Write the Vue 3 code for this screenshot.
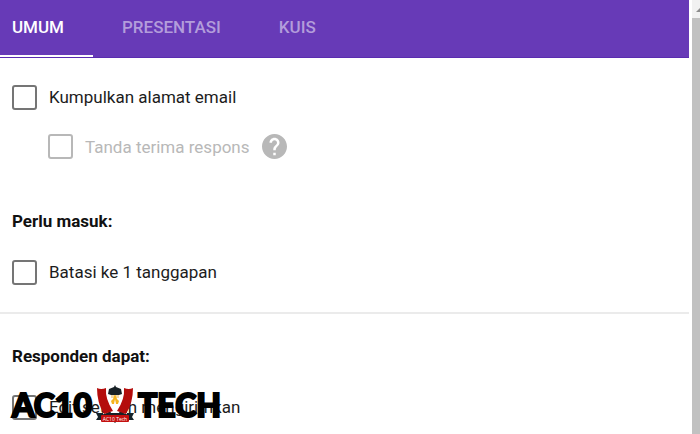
<template>
  <div class="dialog">
    <main class="settings">
      <nav class="tabs" role="tablist">
        <button
          v-for="tab in tabs"
          :key="tab"
          type="button"
          role="tab"
          :aria-selected="tab === activeTab"
          :class="['tab', { active: tab === activeTab }]"
          @click="activeTab = tab"
        >
          {{ tab }}
        </button>
      </nav>

      <section class="section first">
        <label class="option">
          <input v-model="collectEmail" type="checkbox" class="checkbox" />
          <span>Kumpulkan alamat email</span>
        </label>
        <div class="sub-option">
          <label class="option disabled">
            <input type="checkbox" class="checkbox" disabled />
            <span>Tanda terima respons</span>
          </label>
          <svg class="help" viewBox="2 2 20 20" aria-hidden="true">
            <path
              d="M12 2C6.48 2 2 6.48 2 12s4.48 10 10 10 10-4.48 10-10S17.52 2 12 2zm1 17h-2v-2h2v2zm2.07-7.75l-.9.92C13.45 12.9 13 13.5 13 15h-2v-.5c0-1.1.45-2.1 1.17-2.83l1.24-1.26c.37-.36.59-.86.59-1.41 0-1.1-.9-2-2-2s-2 .9-2 2H8c0-2.21 1.79-4 4-4s4 1.79 4 4c0 .88-.36 1.68-.93 2.25z"
            />
          </svg>
        </div>
        <h2 class="heading">Perlu masuk:</h2>
        <label class="option">
          <input v-model="limitResponse" type="checkbox" class="checkbox" />
          <span>Batasi ke 1 tanggapan</span>
        </label>
      </section>

      <section class="section second">
        <h2 class="heading">Responden dapat:</h2>
        <div class="marked">
          <label class="option">
            <input v-model="editAfter" type="checkbox" class="checkbox" />
            <span>Edit setelah mengirimkan</span>
          </label>
          <div class="watermark">
            <span>AC10</span>
            <svg class="crest" viewBox="0 0 38 38" aria-hidden="true">
              <path d="M0 28h7v7H0l2-3zM38 28h-7v7h7l-2-3z" fill="#14232b" />
              <path d="M5 30L19 25l14 5-3 4H8z" fill="#182126" />
              <path d="M12 8h14l3 6-6 14h-8L9 14z" fill="#fff" />
              <path d="M15 9h8v4h-8z" fill="#f3d9a6" />
              <path d="M19 9l2 5 2 2-1 3h-6l-1-3 2-2z" fill="#f6b51e" />
              <path d="M19 14l1 5h-2z" fill="#fff" />
              <path d="M12 9l1-5 5-2 1-2 1 2 5 2 1 5-3 1h-8z" fill="#182126" />
              <path
                d="M1 3q4 2 9 0q-1 11 7 23L8 29Q1 18 1 3zM37 3q-4 2-9 0q1 11-7 23l9 3Q37 18 37 3z"
                fill="#b40d0c"
              />
              <path d="M17 36h4l-2 2z" fill="#182126" />
              <rect x="5" y="30" width="28" height="7" rx="1" fill="#c4100f" />
              <text x="19" y="36" text-anchor="middle" class="crest-name">AC10 Tech</text>
            </svg>
            <span>TECH</span>
          </div>
        </div>
      </section>
    </main>

    <div class="scrollbar" aria-hidden="true">
      <div class="scroll-up">
        <svg viewBox="0 0 12 6"><path d="M0 6l6-6 6 6z" /></svg>
      </div>
      <div class="thumb"></div>
    </div>
  </div>
</template>

<script setup>
import { ref } from 'vue';

const tabs = ['UMUM', 'PRESENTASI', 'KUIS'];
const activeTab = ref('UMUM');

const collectEmail = ref(false);
const limitResponse = ref(false);
const editAfter = ref(false);
</script>

<style>
body {
  margin: 0;
  overflow: hidden;
}
</style>

<style scoped>
.dialog {
  display: flex;
  height: 100vh;
  overflow: hidden;
  background: #fff;
  color: #1c1c1c;
  font-family: Roboto, 'Liberation Sans', sans-serif;
  font-size: 17px;
  line-height: 24px;
}

.settings {
  flex: 1;
  min-width: 0;
}

.tabs {
  display: flex;
  height: 58px;
  box-sizing: border-box;
  background: #673ab7;
  border-bottom: 1px solid #5a2cb0;
}

.tab {
  padding: 0 29px 2px;
  border: 0;
  border-bottom: 2px solid transparent;
  background: none;
  color: #b39ddb;
  font: 500 17px/24px Roboto, 'Liberation Sans', sans-serif;
  cursor: pointer;
}

.tab:first-child {
  padding-left: 12px;
}

.tab.active {
  color: #fff;
  border-bottom-color: #fff;
}

.section {
  padding: 0 12px;
}

.first {
  padding-top: 27px;
  padding-bottom: 28px;
}

.second {
  padding-top: 30px;
  border-top: 2px solid #ebebeb;
}

.option {
  display: flex;
  align-items: center;
  gap: 12px;
  height: 24px;
}

.checkbox {
  appearance: none;
  box-sizing: border-box;
  flex: none;
  width: 25px;
  height: 25px;
  margin: 0;
  border: 2px solid #757575;
  border-radius: 3px;
  background: #fff;
}

.checkbox:checked {
  background: #673ab7;
}

.sub-option {
  display: flex;
  align-items: center;
  gap: 12px;
  margin: 25px 0 0 36px;
}

.disabled {
  color: #b8b8b8;
}

.disabled .checkbox {
  border-color: #b8b8b8;
}

.help {
  width: 25px;
  height: 25px;
  fill: #b8b8b8;
}

.heading {
  margin: 0 0 27px;
  color: #111;
  font-size: 17px;
  font-weight: 700;
  line-height: 24px;
}

.sub-option + .heading {
  margin-top: 50px;
}

.marked {
  position: relative;
}

.watermark {
  position: absolute;
  top: -10px;
  left: 0;
  display: flex;
  align-items: center;
  gap: 4px;
  color: #000;
  font: 900 32px/40px Lato, 'Liberation Sans', sans-serif;
  -webkit-text-stroke: 2px #000;
}

.crest {
  width: 38px;
  height: 38px;
  margin-bottom: 2px;
}

.crest-name {
  fill: #fff;
  font: 400 5px 'Open Sans', sans-serif;
  -webkit-text-stroke: 0;
}

.scrollbar {
  display: flex;
  flex-direction: column;
  width: 8px;
  margin-left: 3px;
  overflow: hidden;
}

.scroll-up {
  height: 18px;
  padding-top: 7px;
  box-sizing: border-box;
  background: #f1f1f1;
}

.scroll-up svg {
  display: block;
  width: 12px;
  height: 5px;
  margin-left: 3px;
  fill: #8c8c8c;
}

.thumb {
  flex: 1;
  background: #c1c1c1;
}
</style>
